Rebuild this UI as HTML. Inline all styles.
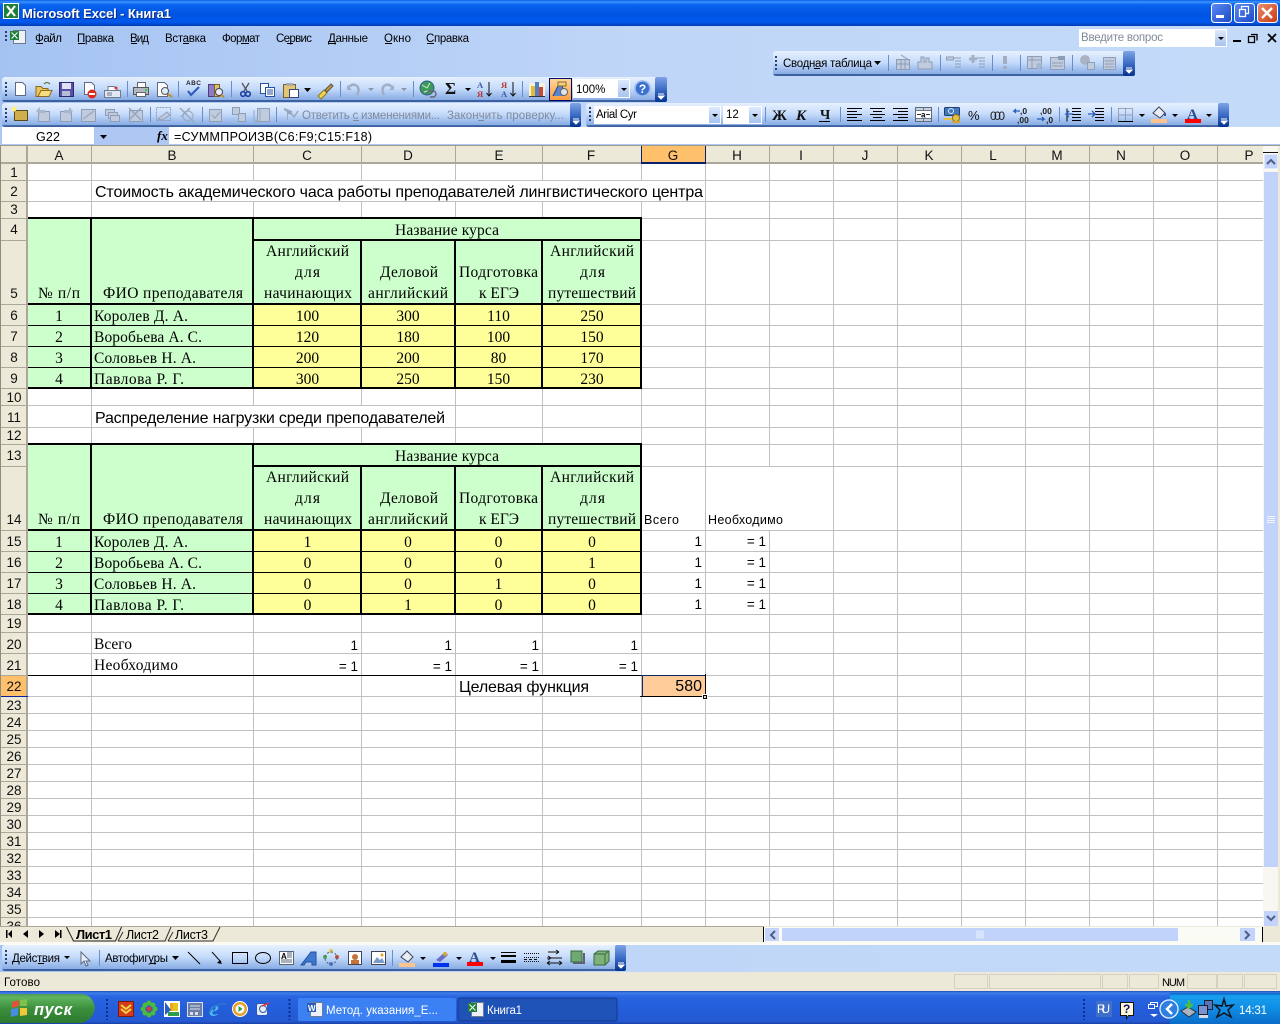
<!DOCTYPE html>
<html lang="ru">
<head>
<meta charset="utf-8">
<title>Microsoft Excel - Книга1</title>
<style>
html,body{margin:0;padding:0;background:#fff;overflow:hidden}
svg{display:block}
text{font-family:"Liberation Sans","Noto Sans CJK SC",sans-serif;font-size:12px;fill:#000;white-space:pre}
.h{font-size:13.5px;text-anchor:middle;fill:#111}
.r{font-size:13.5px;text-anchor:middle;fill:#111}
.t{font-family:"Liberation Serif","Noto Serif CJK SC",serif;font-size:15.5px;transform:translateY(1px)}
.t.u{transform:none}
.c{text-anchor:middle}
.e{text-anchor:end}
.a{font-size:13.5px}
.m{font-size:11.5px}
.g{font-size:11.5px;fill:#808a9c}
.w{fill:#fff;font-size:11.5px}
.cr{shape-rendering:crispEdges}
.sep{stroke:#6a8ccb;stroke-width:1}
.hd{stroke:#27416f;stroke-width:2;stroke-dasharray:2 2;fill:none}
.ds{fill:#c0cbdd;stroke:#8f9db6;stroke-width:1}
.dl{stroke:#8e9cb5;stroke-width:1;fill:none}
.k{stroke:#000;stroke-width:1;fill:none}
</style>
</head>
<body>
<svg xmlns="http://www.w3.org/2000/svg" width="1280" height="1024" viewBox="0 0 1280 1024">
<defs>
<linearGradient id="ttl" x1="0" y1="0" x2="0" y2="1"><stop offset="0" stop-color="#0a5ce6"/><stop offset=".07" stop-color="#3b93ff"/><stop offset=".18" stop-color="#0a63ee"/><stop offset=".55" stop-color="#0054e3"/><stop offset=".85" stop-color="#0058ee"/><stop offset="1" stop-color="#003cb0"/></linearGradient>
<linearGradient id="bar" x1="0" y1="0" x2="1" y2="0"><stop offset="0" stop-color="#a5c3f2"/><stop offset=".5" stop-color="#c0d6f8"/><stop offset="1" stop-color="#c4daf9"/></linearGradient>
<linearGradient id="tb" x1="0" y1="0" x2="0" y2="1"><stop offset="0" stop-color="#e6f0fe"/><stop offset=".45" stop-color="#c6dcfb"/><stop offset=".92" stop-color="#88ace4"/><stop offset=".93" stop-color="#3b619f"/><stop offset="1" stop-color="#3b619f"/></linearGradient>
<linearGradient id="che" x1="0" y1="0" x2="0" y2="1"><stop offset="0" stop-color="#7ea3e6"/><stop offset=".5" stop-color="#3c6cc4"/><stop offset="1" stop-color="#04338f"/></linearGradient>
<linearGradient id="dd" x1="0" y1="0" x2="0" y2="1"><stop offset="0" stop-color="#dde9fc"/><stop offset="1" stop-color="#a6c2ee"/></linearGradient>
<linearGradient id="btn" x1="0" y1="0" x2="1" y2="1"><stop offset="0" stop-color="#5c8cf2"/><stop offset="1" stop-color="#1c48c8"/></linearGradient>
<linearGradient id="cls" x1="0" y1="0" x2="1" y2="1"><stop offset="0" stop-color="#ea8f6e"/><stop offset="1" stop-color="#c83a14"/></linearGradient>
<linearGradient id="task" x1="0" y1="0" x2="0" y2="1"><stop offset="0" stop-color="#1f4fc2"/><stop offset=".06" stop-color="#3f7ee8"/><stop offset=".16" stop-color="#2a66e0"/><stop offset=".5" stop-color="#245edb"/><stop offset=".92" stop-color="#2459d2"/><stop offset="1" stop-color="#1941a5"/></linearGradient>
<linearGradient id="tray" x1="0" y1="0" x2="0" y2="1"><stop offset="0" stop-color="#0c62c4"/><stop offset=".1" stop-color="#19a0ee"/><stop offset=".5" stop-color="#0f8de4"/><stop offset="1" stop-color="#0a6cc8"/></linearGradient>
<linearGradient id="st" x1="0" y1="0" x2="0" y2="1"><stop offset="0" stop-color="#4f9a4f"/><stop offset=".12" stop-color="#5fb45f"/><stop offset=".5" stop-color="#3c8f3c"/><stop offset="1" stop-color="#2e7a30"/></linearGradient>
<linearGradient id="act" x1="0" y1="0" x2="0" y2="1"><stop offset="0" stop-color="#ffd79c"/><stop offset="1" stop-color="#fb9c40"/></linearGradient>
</defs>

<!-- window chrome -->
<rect width="1280" height="146" fill="url(#bar)"/>
<rect width="1280" height="26" fill="url(#ttl)"/>
<g class="cr"><rect x="3" y="3" width="16" height="16" fill="#fff"/><rect x="4" y="4" width="14" height="14" fill="#1f7f3a"/></g>
<path d="M7 6l8 10M15 6l-8 10" stroke="#fff" stroke-width="2.2"/>
<text x="23" y="19" textLength="149" style="font-size:13px;font-weight:700;fill:#0b2a80">Microsoft Excel - Книга1</text>
<text x="22" y="18" textLength="149" style="font-size:13px;font-weight:700;fill:#fff">Microsoft Excel - Книга1</text>
<!-- caption buttons -->
<rect x="1211.5" y="3.5" width="20" height="19" rx="3" fill="url(#btn)" stroke="#fff"/>
<rect x="1216" y="15" width="8" height="3" fill="#fff"/>
<rect x="1234.5" y="3.5" width="20" height="19" rx="3" fill="url(#btn)" stroke="#fff"/>
<path d="M1241.5 9.5v-3h7v7h-3M1239.5 9.5h6v7h-6z" stroke="#fff" stroke-width="1.2" fill="none"/>
<rect x="1257.5" y="3.5" width="20" height="19" rx="3" fill="url(#cls)" stroke="#fff"/>
<path d="M1262 8l10 10M1272 8l-10 10" stroke="#fff" stroke-width="2.4"/>

<!-- menu bar -->
<line x1="6" y1="31" x2="6" y2="43" class="hd"/>
<rect x="13.5" y="30.5" width="12" height="13" fill="#eef2f8" stroke="#6b7b92"/>
<rect x="10" y="31" width="9" height="9" fill="#1f7f3a"/>
<path d="M11.5 32.5l6 6M17.5 32.5l-6 6" stroke="#fff"/>
<text class="m" x="35" y="42" textLength="27">Файл</text>
<text class="m" x="77" y="42" textLength="37">Правка</text>
<text class="m" x="130" y="42" textLength="19">Вид</text>
<text class="m" x="165" y="42" textLength="41">Вставка</text>
<text class="m" x="222" y="42" textLength="38">Формат</text>
<text class="m" x="276" y="42" textLength="36">Сервис</text>
<text class="m" x="328" y="42" textLength="40">Данные</text>
<text class="m" x="384" y="42" textLength="27">Окно</text>
<text class="m" x="426" y="42" textLength="43">Справка</text>
<g class="cr" fill="#000"><rect x="36" y="43" width="7" height="1"/><rect x="78" y="43" width="7" height="1"/><rect x="131" y="43" width="6" height="1"/><rect x="183" y="43" width="6" height="1"/><rect x="241" y="43" width="8" height="1"/><rect x="287" y="43" width="6" height="1"/><rect x="329" y="43" width="7" height="1"/><rect x="385" y="43" width="7" height="1"/><rect x="427" y="43" width="7" height="1"/></g>
<!-- ask box -->
<rect x="1079" y="29" width="148" height="18" fill="#fff" class="cr"/>
<rect x="1215" y="30" width="11" height="16" fill="url(#dd)" class="cr"/>
<path d="M1218 37h6l-3 3z"/>
<text class="g" x="1081" y="41" textLength="82">Введите вопрос</text>
<rect x="1233" y="40" width="8" height="2" class="cr"/>
<path d="M1251 34.5h6v6M1248.5 36.5h6v6h-6z" fill="none" stroke="#000" stroke-width="1.3"/>
<path d="M1268 34l8 8M1276 34l-8 8" stroke="#000" stroke-width="1.8"/>

<!-- pivot toolbar -->
<rect x="773" y="51" width="362" height="25" rx="3" fill="url(#tb)"/>
<rect x="1123" y="51" width="12" height="25" rx="2" fill="url(#che)"/>
<path d="M1126 68h6M1126 70h6l-3 3-3-3" stroke="#fff" fill="#fff"/>
<line x1="776" y1="56" x2="776" y2="70" class="hd"/>
<text class="m" x="783" y="67" textLength="89">Сводная таблица</text>
<rect x="814" y="68" width="6" height="1" class="cr"/>
<path d="M874 61h7l-3.5 4z"/>
<g class="sep"><line x1="888.5" y1="55" x2="888.5" y2="71"/><line x1="940.5" y1="55" x2="940.5" y2="71"/><line x1="992.5" y1="55" x2="992.5" y2="71"/><line x1="1020.5" y1="55" x2="1020.5" y2="71"/><line x1="1072.5" y1="55" x2="1072.5" y2="71"/></g>
<g>
<rect class="ds" x="896.5" y="59.5" width="13" height="10"/><path class="dl" d="M901 55l8 5M896 64h13M901 60v9M905 60v9"/>
<path class="ds" d="M918 69v-7h3v-5h3v5h2v-4h3v4h3v7z"/>
<path class="dl" d="M953 58h8M955 61h6M955 64h6M955 67h6"/><rect class="ds" x="946.5" y="57" width="7" height="3"/>
<path class="dl" d="M977 58h8M979 61h6M979 64h6M979 67h6"/><path d="M969 59h8M973 55v8" stroke="#a4b0c6" stroke-width="3"/>
<path d="M1005 56v8" stroke="#a3adbf" stroke-width="4"/><rect x="1003" y="66" width="4" height="3" fill="#a3adbf"/>
<rect class="ds" x="1027.5" y="56.5" width="14" height="12"/><path class="dl" d="M1027 60h14M1032 57v12"/><circle cx="1039" cy="66" r="3" fill="#a4b6d0"/>
<rect class="ds" x="1050.5" y="57.5" width="14" height="12"/><rect x="1058" y="56" width="7" height="4" fill="#8e9cb5"/><path class="dl" d="M1052 63h11M1052 66h11"/>
<circle cx="1085" cy="60" r="5" fill="#aab3c3"/><rect class="ds" x="1087.5" y="62.5" width="7" height="7"/>
<rect class="ds" x="1103.5" y="57.5" width="12" height="12"/><path class="dl" d="M1105 61h9M1105 64h9M1105 67h9"/>
</g>

<!-- standard toolbar -->
<rect x="2" y="77" width="665" height="25" rx="3" fill="url(#tb)"/>
<rect x="655" y="77" width="12" height="25" rx="2" fill="url(#che)"/>
<path d="M658 94h6M658 96h6l-3 3-3-3" stroke="#fff" fill="#fff"/>
<line x1="6" y1="82" x2="6" y2="97" class="hd"/>
<path d="M15.5 82.5h7l3 3v10h-10z" fill="#fff" stroke="#5d6a82"/>
<path d="M36 86.5h5l2 2h5v8H36z" fill="#e8c45c" stroke="#8a6a1c"/><path d="M38 96.5l3-6h11l-3 6z" fill="#f8dc80" stroke="#8a6a1c"/><path d="M44 84q3-3 6 0" stroke="#3a6a2c" fill="none"/>
<rect x="59.5" y="82.5" width="14" height="14" fill="#5a4fa8" stroke="#2d2a70"/><rect x="62" y="83" width="9" height="6" fill="#dfe3ef"/><rect x="62" y="91" width="8" height="5" fill="#b6bcd6"/>
<path d="M84.5 82.5h7l3 3v9h-10z" fill="#fff" stroke="#5d6a82"/><circle cx="92" cy="94" r="4.5" fill="#dd2b1b"/><rect x="89" y="93" width="6" height="2" fill="#fff"/>
<path d="M108 86.5h6l4 4h-10z" fill="#fff" stroke="#6d7a92"/><rect x="104.5" y="90.5" width="16" height="7" fill="#e2e6ee" stroke="#6d7a92"/><circle cx="116" cy="88" r="1.5" fill="#d33"/><path d="M107 93h5M107 95h5" stroke="#6d7a92"/>
<rect x="137.5" y="82.5" width="8" height="5" fill="#fff" stroke="#666"/><rect x="133.5" y="87.5" width="15" height="7" fill="#b4b8c4" stroke="#555"/><rect x="136.5" y="92.5" width="9" height="4" fill="#fff" stroke="#666"/><rect x="145" y="89" width="2" height="2" fill="#3c3"/>
<path d="M157.5 82.5h7l3 3v11h-10z" fill="#fff" stroke="#5d6a82"/><circle cx="165" cy="91" r="3.5" fill="#dfeefa" stroke="#555"/><path d="M168 94l4 3" stroke="#c88a22" stroke-width="2"/>
<text x="186" y="85" style="font-size:6.5px;font-weight:700;fill:#223" textLength="15">ABC</text><path d="M188 91l3 4 8-8" stroke="#2a58b8" stroke-width="2" fill="none"/>
<rect x="208.5" y="84.5" width="6" height="12" fill="#8d7cc4" stroke="#4a3d84"/><rect x="214.5" y="84.5" width="5" height="12" fill="#d8c46c" stroke="#776628"/><circle cx="219" cy="92" r="3.5" fill="#eef" stroke="#445"/><path d="M221 95l3 2" stroke="#c88a22" stroke-width="2"/>
<path d="M242 83l5 8M249 83l-5 8" stroke="#555" stroke-width="1.3"/><circle cx="243" cy="94" r="2.3" fill="none" stroke="#1f3f9f" stroke-width="1.6"/><circle cx="248" cy="94" r="2.3" fill="none" stroke="#1f3f9f" stroke-width="1.6"/>
<path d="M260.5 83.5h8v10h-8z" fill="#fff" stroke="#2a4f9f"/><path d="M265.5 87.5h9v9h-9z" fill="#fff" stroke="#2a4f9f"/><path d="M267 90h6M267 92h6M267 94h6" stroke="#2a4f9f"/>
<rect x="283.5" y="84.5" width="12" height="13" fill="#e2c677" stroke="#77602a"/><rect x="286" y="83" width="7" height="3" fill="#aaa"/><rect x="289.5" y="89.5" width="9" height="8" fill="#fff" stroke="#33457a"/>
<path d="M304 88h7l-3.5 4z"/>
<path d="M318 96l6-6 3 3-6 6z" fill="#f2d24e" stroke="#8b7a22"/><path d="M325 90l6-6 2 2-6 6z" fill="#c89a2c" stroke="#555"/>
<g class="sep"><line x1="127.5" y1="81" x2="127.5" y2="97"/><line x1="178.5" y1="81" x2="178.5" y2="97"/><line x1="231.5" y1="81" x2="231.5" y2="97"/><line x1="340.5" y1="81" x2="340.5" y2="97"/><line x1="413.5" y1="81" x2="413.5" y2="97"/><line x1="522.5" y1="81" x2="522.5" y2="97"/></g>
<path d="M349 87q4-4 8-1 3 3 0 9" stroke="#a1afc6" stroke-width="2.5" fill="none"/><path d="M347 85v5h5z" fill="#a1afc6"/>
<path d="M368 88h6l-3 3z" fill="#8a94a8"/>
<path d="M392 87q-4-4-8-1-3 3 0 9" stroke="#a1afc6" stroke-width="2.5" fill="none"/><path d="M394 85v5h-5z" fill="#a1afc6"/>
<path d="M401 88h6l-3 3z" fill="#8a94a8"/>
<circle cx="427" cy="88" r="7" fill="#3f9a5a" stroke="#2c5f8f"/><path d="M422 85l5 3 3-5M424 92l4-1" stroke="#cfe9d2" fill="none"/><path d="M427 94a3 3 0 0 1 3-3h3a3 3 0 0 1 0 6h-3" stroke="#667" stroke-width="1.4" fill="none"/>
<text x="445" y="94" style="font-family:'Liberation Serif',serif;font-size:17px;font-weight:700;fill:#111">Σ</text>
<path d="M465 88h6l-3 3z"/>
<text x="477" y="88" style="font-family:'Liberation Serif',serif;font-size:8.5px;font-weight:700;fill:#3a5aa8">А</text><text x="477" y="97" style="font-family:'Liberation Serif',serif;font-size:8.5px;font-weight:700;fill:#b83a3a">Я</text>
<path d="M489 82v14M486.5 93l2.5 3 2.5-3" stroke="#111" fill="none"/>
<text x="501" y="88" style="font-family:'Liberation Serif',serif;font-size:8.5px;font-weight:700;fill:#b83a3a">Я</text><text x="501" y="97" style="font-family:'Liberation Serif',serif;font-size:8.5px;font-weight:700;fill:#3a5aa8">А</text>
<path d="M513 82v14M510.5 93l2.5 3 2.5-3" stroke="#111" fill="none"/>
<g class="cr"><rect x="529" y="83" width="16" height="13" fill="#f6f2dc"/><rect x="531" y="86" width="4" height="10" fill="#e2bb3b"/><rect x="535" y="82" width="4" height="14" fill="#4f7fc9"/><rect x="539" y="87" width="4" height="9" fill="#c84a3a"/><rect x="529" y="96" width="16" height="1" fill="#334"/></g>
<rect x="549.5" y="78.5" width="22" height="22" fill="url(#act)" stroke="#000a6c"/>
<path d="M553 96l6-12h3l2 12" fill="#5a85cc" stroke="#2c3f80"/><rect x="558" y="82" width="8" height="4" fill="#f0d27a" stroke="#8a6a2a"/><circle cx="564" cy="92" r="3.5" fill="#dfe6ef" stroke="#666"/>
<rect x="573" y="79" width="57" height="19" fill="#fff" class="cr"/>
<rect x="618" y="80" width="11" height="17" fill="url(#dd)" class="cr"/>
<path d="M621 88h6l-3 3z"/>
<text x="576" y="93" style="font-size:11.5px">100%</text>
<circle cx="642.5" cy="88.5" r="7.5" fill="#3a70d0" stroke="#9ab9ea" stroke-width="1.6"/>
<text x="642.5" y="93" class="c" style="font-size:12px;font-weight:700;fill:#fff">?</text>

<!-- reviewing toolbar -->
<rect x="2" y="103" width="579" height="24" rx="3" fill="url(#tb)"/>
<rect x="570" y="103" width="11" height="24" rx="2" fill="url(#che)"/>
<path d="M573 119h6M573 121h6l-3 3-3-3" stroke="#fff" fill="#fff"/>
<line x1="6" y1="108" x2="6" y2="122" class="hd"/>
<rect x="14.5" y="110.5" width="13" height="10" fill="#cfae4e" stroke="#5a4a1c"/><circle cx="14" cy="109" r="2.5" fill="#fff27a"/>
<g>
<rect class="ds" x="38.5" y="111.5" width="11" height="10"/><path d="M36 111l4-4v3h5v3h-5v2z" fill="#a9b6cc"/>
<rect class="ds" x="60.5" y="111.5" width="11" height="10"/><path d="M73 111l-4-4v3h-5v3h5v2z" fill="#a9b6cc"/>
<rect class="ds" x="81.5" y="109.5" width="14" height="12"/><path class="dl" d="M83 119l11-8"/>
<rect class="ds" x="105.5" y="109.5" width="9" height="6"/><rect class="ds" x="108.5" y="112.5" width="9" height="6"/><rect class="ds" x="110.5" y="115.5" width="9" height="6"/>
<rect class="ds" x="129.5" y="110.5" width="13" height="11"/><path d="M129 108l12 12M141 108l-12 12" stroke="#98a6bc" stroke-width="1.5"/>
<path class="dl" stroke-dasharray="2 1" d="M156.5 107.5h14v13h-14z"/><path class="ds" d="M158 119l9-7 3 3-8 5z"/>
<path d="M180 108l14 14M190 108l-9 9" stroke="#9aa8be" stroke-width="1.5"/><circle cx="188" cy="116" r="5" fill="none" stroke="#9aa8be"/>
<rect class="ds" x="209.5" y="109.5" width="12" height="12"/><path d="M212 115l3 3 5-6" stroke="#94a2b8" fill="none"/>
<rect class="ds" x="232.5" y="107.5" width="7" height="7"/><rect class="ds" x="238.5" y="113.5" width="7" height="8"/>
<rect class="ds" x="257.5" y="108.5" width="12" height="13"/><path d="M254 110v9a3 3 0 0 0 6 0v-10" stroke="#98a6bc" fill="none"/>
<path d="M284 108l8 3v4l-4-1v6h-1v-8l-3-2z" fill="#9aa8be"/><path d="M291 113l3 4 4-6" stroke="#9aa8be" stroke-width="1.5" fill="none"/>
</g>
<g class="sep"><line x1="150.5" y1="107" x2="150.5" y2="122"/><line x1="202.5" y1="107" x2="202.5" y2="122"/><line x1="276.5" y1="107" x2="276.5" y2="122"/></g>
<text class="g" x="302" y="119" textLength="138">Ответить с изменениями...</text>
<text class="g" x="447" y="119" textLength="117">Закончить проверку...</text>
<rect x="353" y="120" width="6" height="1" fill="#808a9c" class="cr"/><rect x="478" y="120" width="6" height="1" fill="#808a9c" class="cr"/>

<!-- formatting toolbar -->
<rect x="586" y="103" width="643" height="24" rx="3" fill="url(#tb)"/>
<rect x="1218" y="103" width="11" height="24" rx="2" fill="url(#che)"/>
<path d="M1221 119h6M1221 121h6l-3 3-3-3" stroke="#fff" fill="#fff"/>
<line x1="590" y1="107" x2="590" y2="122" class="hd"/>
<rect x="594" y="106" width="127" height="18" fill="#fff" class="cr"/>
<rect x="709" y="107" width="11" height="16" fill="url(#dd)" class="cr"/>
<path d="M712 114h6l-3 3z"/>
<text x="596" y="118" style="font-size:11.5px" textLength="41">Arial Cyr</text>
<rect x="723" y="106" width="39" height="18" fill="#fff" class="cr"/>
<rect x="749" y="107" width="12" height="16" fill="url(#dd)" class="cr"/>
<path d="M752 114h6l-3 3z"/>
<text x="726" y="118" style="font-size:11.5px">12</text>
<g class="sep"><line x1="765.5" y1="107" x2="765.5" y2="122"/><line x1="840.5" y1="107" x2="840.5" y2="122"/><line x1="938.5" y1="107" x2="938.5" y2="122"/><line x1="1059.5" y1="107" x2="1059.5" y2="122"/><line x1="1111.5" y1="107" x2="1111.5" y2="122"/></g>
<text x="772" y="120" style="font-family:'Liberation Serif',serif;font-size:15px;font-weight:700;fill:#111">Ж</text>
<text x="796" y="120" style="font-family:'Liberation Serif',serif;font-size:15px;font-weight:700;font-style:italic;fill:#111">К</text>
<text x="820" y="119" style="font-family:'Liberation Serif',serif;font-size:14px;font-weight:700;fill:#111">Ч</text><rect x="819" y="121" width="11" height="1" class="cr"/>
<path class="k" d="M847 108.5h15M847 111.5h10M847 114.5h15M847 117.5h10M847 120.5h15"/>
<path class="k" d="M870 108.5h15M873 111.5h9M870 114.5h15M873 117.5h9M870 120.5h15"/>
<path class="k" d="M893 108.5h15M898 111.5h10M893 114.5h15M898 117.5h10M893 120.5h15"/>
<rect x="915.5" y="107.5" width="16" height="14" fill="#c8d0e0" stroke="#5c6b80"/><path d="M916 110.5h15M916 118.5h15M923.5 108v3M923.5 118v3" stroke="#6a778c"/><rect x="916" y="111" width="15" height="7" fill="#fff"/><path d="M917 114.5h4M926 114.5h4" stroke="#333"/><text x="921" y="117.5" style="font-size:8px;font-weight:700">a</text>
<rect x="944.5" y="107.5" width="15" height="8" rx="1" fill="#4278c0" stroke="#223f70"/><circle cx="951" cy="111" r="2.5" fill="none" stroke="#dfe8f8"/><circle cx="956" cy="118" r="3.5" fill="#e8c23c" stroke="#8a6e1c"/><rect x="944" y="118" width="8" height="2" fill="#e8c23c"/><rect x="952" y="121" width="8" height="2" fill="#d2a62c"/>
<text x="968" y="120" style="font-size:13px;fill:#111">%</text>
<text x="990" y="120" style="font-size:12px;fill:#222" textLength="15">000</text>
<text x="1020" y="114" style="font-size:8.5px;font-weight:700;fill:#222">,0</text><text x="1017" y="123" style="font-size:8.5px;font-weight:700;fill:#222">,00</text><path d="M1020 111h-6l2-2m-2 2l2 2" stroke="#2a58b8" stroke-width="1.3" fill="none"/>
<text x="1040" y="114" style="font-size:8.5px;font-weight:700;fill:#222">,00</text><text x="1046" y="123" style="font-size:8.5px;font-weight:700;fill:#222">,0</text><path d="M1037 119h7l-2-2m2 2l-2 2" stroke="#2a58b8" stroke-width="1.3" fill="none"/>
<path class="k" d="M1072 108.5h9M1072 111.5h9M1072 114.5h9M1072 117.5h9M1072 120.5h9M1067 108.5v13"/><path d="M1073 114h-7l3-3m-3 3l3 3" stroke="#2a58b8" stroke-width="1.3" fill="none"/>
<path class="k" d="M1095 108.5h9M1095 111.5h9M1095 114.5h9M1095 117.5h9M1095 120.5h9"/><path d="M1088 114h7l-3-3m3 3l-3 3" stroke="#2a58b8" stroke-width="1.3" fill="none"/>
<path d="M1118.5 108.5h14v13M1118.5 108.5v13M1125.5 108.5v13M1118.5 115h14" stroke="#667" stroke-dasharray="1 1" fill="none"/><rect x="1118" y="121" width="15" height="1" class="cr"/>
<path d="M1139 114h6l-3 3z"/>
<path d="M1153 113l6-6 6 6-5 5z" fill="#e8eef8" stroke="#445"/><path d="M1165 113v3" stroke="#35a" stroke-width="2"/><rect x="1151" y="119" width="16" height="4" fill="#fcc48c" class="cr"/>
<path d="M1172 114h6l-3 3z"/>
<text x="1187" y="119" style="font-family:'Liberation Serif',serif;font-size:15px;font-weight:700;fill:#2d4a90">A</text><rect x="1185" y="119" width="16" height="4" fill="#f00" class="cr"/>
<path d="M1206 114h6l-3 3z"/>

<!-- formula bar -->
<g class="cr">
<rect x="0" y="127" width="1280" height="18" fill="#aec8f3"/>
<rect x="2" y="127" width="92" height="17" fill="#fff"/>
<rect x="169" y="127" width="1111" height="17" fill="#fff"/>
<rect x="0" y="145" width="1280" height="1" fill="#9d9a8c"/>
</g>
<path d="M100 135h7l-3.5 4z"/>
<text x="36" y="141" style="font-size:12.5px" textLength="24">G22</text>
<text x="157" y="140" style="font-family:'Liberation Serif',serif;font-size:13px;font-style:italic;font-weight:700">fx</text>
<text x="174" y="141" style="font-size:12.5px" textLength="198">=СУММПРОИЗВ(C6:F9;C15:F18)</text>

<!-- sheet area -->
<rect x="0" y="146" width="1280" height="781" fill="#fff" class="cr"/>

<!-- fills -->
<g class="cr">
<rect x="27" y="218" width="614" height="86" fill="#ccffcc"/>
<rect x="27" y="304" width="226" height="84" fill="#ccffcc"/>
<rect x="253" y="304" width="388" height="84" fill="#ffff99"/>
<rect x="27" y="444" width="614" height="86" fill="#ccffcc"/>
<rect x="27" y="530" width="226" height="84" fill="#ccffcc"/>
<rect x="253" y="530" width="388" height="84" fill="#ffff99"/>
<rect x="642" y="676" width="63" height="20" fill="#ffcc99"/>
</g>

<!-- gridlines -->
<path class="cr" stroke="#c0c0c0" fill="none" d="M27 180.5H1263M27 201.5H1263M27 218.5H1263M641 240.5H1263M641 304.5H1263M641 325.5H1263M641 346.5H1263M641 367.5H1263M27 388.5H1263M27 405.5H1263M27 427.5H1263M27 444.5H1263M641 466.5H1263M641 530.5H1263M641 551.5H1263M641 572.5H1263M641 593.5H1263M27 614.5H1263M27 632.5H1263M27 653.5H1263M641 675.5H1263M27 696.5H1263M27 713.5H1263M27 730.5H1263M27 747.5H1263M27 764.5H1263M27 781.5H1263M27 798.5H1263M27 815.5H1263M27 832.5H1263M27 849.5H1263M27 866.5H1263M27 883.5H1263M27 900.5H1263M27 917.5H1263
M91.5 163V218M91.5 388V444M91.5 614V927
M253.5 163V180M253.5 201V218M253.5 388V405M253.5 427V444M253.5 614V927
M361.5 163V180M361.5 201V218M361.5 388V405M361.5 427V444M361.5 614V927
M455.5 163V180M455.5 201V218M455.5 388V444M455.5 614V927
M542.5 163V180M542.5 201V218M542.5 388V444M542.5 614V675M542.5 696V927
M641.5 163V180M641.5 201V218M641.5 388V444M641.5 614V927
M705.5 163V927
M769.5 163V466M769.5 530V927
M833.5 163V927M897.5 163V927M961.5 163V927M1025.5 163V927M1089.5 163V927M1153.5 163V927M1217.5 163V927"/>

<!-- thick borders -->
<g class="cr" fill="#000">
<rect x="26" y="217" width="616" height="2"/><rect x="26" y="387" width="616" height="2"/>
<rect x="26" y="303" width="616" height="2"/><rect x="252" y="239" width="390" height="2"/>
<rect x="90" y="217" width="2" height="172"/><rect x="252" y="217" width="2" height="172"/>
<rect x="360" y="240" width="2" height="149"/><rect x="454" y="240" width="2" height="149"/><rect x="541" y="240" width="2" height="149"/><rect x="640" y="217" width="2" height="172"/>
<rect x="27" y="325" width="614" height="1"/><rect x="27" y="346" width="614" height="1"/><rect x="27" y="367" width="614" height="1"/>
<rect x="26" y="443" width="616" height="2"/><rect x="26" y="613" width="616" height="2"/>
<rect x="26" y="529" width="616" height="2"/><rect x="252" y="465" width="390" height="2"/>
<rect x="90" y="443" width="2" height="172"/><rect x="252" y="443" width="2" height="172"/>
<rect x="360" y="466" width="2" height="149"/><rect x="454" y="466" width="2" height="149"/><rect x="541" y="466" width="2" height="149"/><rect x="640" y="443" width="2" height="172"/>
<rect x="27" y="551" width="614" height="1"/><rect x="27" y="572" width="614" height="1"/><rect x="27" y="593" width="614" height="1"/>
<rect x="27" y="675" width="614" height="1"/>
<rect x="641" y="675" width="65" height="1" fill="#0a2a6a"/><rect x="642" y="676" width="1" height="20" fill="#0a2a6a"/><rect x="705" y="674" width="1" height="22"/><rect x="640" y="696" width="66" height="1"/>
<rect x="702" y="694" width="6" height="6" fill="#fff"/><rect x="703" y="695" width="4" height="4"/><rect x="704" y="696" width="2" height="2" fill="#ddd"/>
</g>

<!-- column headers -->
<g class="cr">
<rect x="0" y="146" width="1264" height="17" fill="#ece9d8"/>
<rect x="0" y="163" width="27" height="764" fill="#ece9d8"/>
<rect x="641" y="146" width="64" height="17" fill="#ffc06c"/>
<rect x="0" y="676" width="27" height="20" fill="#ffc06c"/>
<rect x="0" y="162" width="1264" height="2" fill="#aca899"/>
<rect x="26" y="146" width="2" height="781" fill="#aca899"/>
<rect x="0" y="146" width="1" height="781" fill="#8f8c7e"/>
<path fill="none" stroke="#aca899" d="M91.5 146V163M253.5 146V163M361.5 146V163M455.5 146V163M542.5 146V163M769.5 146V163M833.5 146V163M897.5 146V163M961.5 146V163M1025.5 146V163M1089.5 146V163M1153.5 146V163M1217.5 146V163
M1 180.5H26M1 201.5H26M1 218.5H26M1 240.5H26M1 304.5H26M1 325.5H26M1 346.5H26M1 367.5H26M1 388.5H26M1 405.5H26M1 427.5H26M1 444.5H26M1 466.5H26M1 530.5H26M1 551.5H26M1 572.5H26M1 593.5H26M1 614.5H26M1 632.5H26M1 653.5H26M1 675.5H26M1 713.5H26M1 730.5H26M1 747.5H26M1 764.5H26M1 781.5H26M1 798.5H26M1 815.5H26M1 832.5H26M1 849.5H26M1 866.5H26M1 883.5H26M1 900.5H26M1 917.5H26"/>
<rect x="641" y="146" width="1" height="17" fill="#0a1f6a"/><rect x="705" y="146" width="1" height="17" fill="#0a1f6a"/><rect x="641" y="162" width="65" height="2" fill="#0a1f6a"/>
<rect x="1" y="696" width="27" height="1" fill="#0a1f9a"/>
</g>
<text class="h" x="59" y="160">A</text><text class="h" x="172" y="160">B</text><text class="h" x="307" y="160">C</text><text class="h" x="408" y="160">D</text><text class="h" x="499" y="160">E</text><text class="h" x="591" y="160">F</text><text class="h" x="673" y="160">G</text><text class="h" x="737" y="160">H</text><text class="h" x="801" y="160">I</text><text class="h" x="865" y="160">J</text><text class="h" x="929" y="160">K</text><text class="h" x="993" y="160">L</text><text class="h" x="1057" y="160">M</text><text class="h" x="1121" y="160">N</text><text class="h" x="1185" y="160">O</text><text class="h" x="1249" y="160">P</text>
<g>
<text class="r" x="14" y="177">1</text><text class="r" x="14" y="196">2</text><text class="r" x="14" y="214">3</text><text class="r" x="14" y="234">4</text><text class="r" x="14" y="298">5</text><text class="r" x="14" y="320">6</text><text class="r" x="14" y="341">7</text><text class="r" x="14" y="362">8</text><text class="r" x="14" y="383">9</text><text class="r" x="14" y="402">10</text><text class="r" x="14" y="422">11</text><text class="r" x="14" y="440">12</text><text class="r" x="14" y="460">13</text><text class="r" x="14" y="524">14</text><text class="r" x="14" y="546">15</text><text class="r" x="14" y="567">16</text><text class="r" x="14" y="588">17</text><text class="r" x="14" y="609">18</text><text class="r" x="14" y="628">19</text><text class="r" x="14" y="649">20</text><text class="r" x="14" y="670">21</text><text class="r" x="14" y="691">22</text><text class="r" x="14" y="710">23</text><text class="r" x="14" y="727">24</text><text class="r" x="14" y="744">25</text><text class="r" x="14" y="761">26</text><text class="r" x="14" y="778">27</text><text class="r" x="14" y="795">28</text><text class="r" x="14" y="812">29</text><text class="r" x="14" y="829">30</text><text class="r" x="14" y="846">31</text><text class="r" x="14" y="863">32</text><text class="r" x="14" y="880">33</text><text class="r" x="14" y="897">34</text><text class="r" x="14" y="914">35</text><text class="r" x="14" y="931">36</text>
</g>

<!-- table 1 text -->
<text x="95" y="197" style="font-size:16px" textLength="608">Стоимость академического часа работы преподавателей лингвистического центра</text>
<text class="t" x="395" y="234" textLength="104">Название курса</text>
<text class="t u" x="266" y="256" textLength="83">Английский</text><text class="t u" x="295" y="277" textLength="25">для</text><text class="t u" x="264" y="298" textLength="88">начинающих</text>
<text class="t u" x="380" y="277" textLength="58">Деловой</text><text class="t u" x="368" y="298" textLength="80">английский</text>
<text class="t u" x="459" y="277" textLength="79">Подготовка</text><text class="t u" x="479" y="298" textLength="40">к ЕГЭ</text>
<text class="t u" x="550" y="256" textLength="84">Английский</text><text class="t u" x="580" y="277" textLength="25">для</text><text class="t u" x="548" y="298" textLength="88">путешествий</text>
<text class="t u" x="38" y="298" textLength="42">№ п/п</text><text class="t u" x="103" y="298" textLength="140">ФИО преподавателя</text>
<text class="t c" x="59" y="320">1</text><text class="t c" x="59" y="341">2</text><text class="t c" x="59" y="362">3</text><text class="t c" x="59" y="383">4</text>
<text class="t" x="94" y="320" textLength="94">Королев Д. А.</text><text class="t" x="94" y="341" textLength="108">Воробьева А. С.</text><text class="t" x="94" y="362" textLength="102">Соловьев Н. А.</text><text class="t" x="94" y="383" textLength="90">Павлова Р. Г.</text>
<text class="t c" x="307.5" y="320">100</text><text class="t c" x="408" y="320">300</text><text class="t c" x="498.5" y="320">110</text><text class="t c" x="592" y="320">250</text>
<text class="t c" x="307.5" y="341">120</text><text class="t c" x="408" y="341">180</text><text class="t c" x="498.5" y="341">100</text><text class="t c" x="592" y="341">150</text>
<text class="t c" x="307.5" y="362">200</text><text class="t c" x="408" y="362">200</text><text class="t c" x="498.5" y="362">80</text><text class="t c" x="592" y="362">170</text>
<text class="t c" x="307.5" y="383">300</text><text class="t c" x="408" y="383">250</text><text class="t c" x="498.5" y="383">150</text><text class="t c" x="592" y="383">230</text>

<!-- table 2 text -->
<text x="95" y="423" style="font-size:16px" textLength="350">Распределение нагрузки среди преподавателей</text>
<text class="t" x="395" y="460" textLength="104">Название курса</text>
<text class="t u" x="266" y="482" textLength="83">Английский</text><text class="t u" x="295" y="503" textLength="25">для</text><text class="t u" x="264" y="524" textLength="88">начинающих</text>
<text class="t u" x="380" y="503" textLength="58">Деловой</text><text class="t u" x="368" y="524" textLength="80">английский</text>
<text class="t u" x="459" y="503" textLength="79">Подготовка</text><text class="t u" x="479" y="524" textLength="40">к ЕГЭ</text>
<text class="t u" x="550" y="482" textLength="84">Английский</text><text class="t u" x="580" y="503" textLength="25">для</text><text class="t u" x="548" y="524" textLength="88">путешествий</text>
<text class="t u" x="38" y="524" textLength="42">№ п/п</text><text class="t u" x="103" y="524" textLength="140">ФИО преподавателя</text>
<text class="t c" x="59" y="546">1</text><text class="t c" x="59" y="567">2</text><text class="t c" x="59" y="588">3</text><text class="t c" x="59" y="609">4</text>
<text class="t" x="94" y="546" textLength="94">Королев Д. А.</text><text class="t" x="94" y="567" textLength="108">Воробьева А. С.</text><text class="t" x="94" y="588" textLength="102">Соловьев Н. А.</text><text class="t" x="94" y="609" textLength="90">Павлова Р. Г.</text>
<text class="t c" x="307.5" y="546">1</text><text class="t c" x="408" y="546">0</text><text class="t c" x="498.5" y="546">0</text><text class="t c" x="592" y="546">0</text>
<text class="t c" x="307.5" y="567">0</text><text class="t c" x="408" y="567">0</text><text class="t c" x="498.5" y="567">0</text><text class="t c" x="592" y="567">1</text>
<text class="t c" x="307.5" y="588">0</text><text class="t c" x="408" y="588">0</text><text class="t c" x="498.5" y="588">1</text><text class="t c" x="592" y="588">0</text>
<text class="t c" x="307.5" y="609">0</text><text class="t c" x="408" y="609">1</text><text class="t c" x="498.5" y="609">0</text><text class="t c" x="592" y="609">0</text>

<text x="644" y="524" style="font-size:12.5px" textLength="35">Всего</text>
<text x="708" y="524" style="font-size:12.5px" textLength="75">Необходимо</text>
<text class="a e" x="702" y="546">1</text><text class="a e" x="702" y="567">1</text><text class="a e" x="702" y="588">1</text><text class="a e" x="702" y="609">1</text>
<text class="a e" x="766" y="546">= 1</text><text class="a e" x="766" y="567">= 1</text><text class="a e" x="766" y="588">= 1</text><text class="a e" x="766" y="609">= 1</text>

<!-- rows 20-22 -->
<text class="t" x="94" y="648" textLength="38">Всего</text>
<text class="t" x="94" y="669" textLength="84">Необходимо</text>
<text class="a e" x="358" y="650">1</text><text class="a e" x="452" y="650">1</text><text class="a e" x="539" y="650">1</text><text class="a e" x="638" y="650">1</text>
<text class="a e" x="358" y="671">= 1</text><text class="a e" x="452" y="671">= 1</text><text class="a e" x="539" y="671">= 1</text><text class="a e" x="638" y="671">= 1</text>
<text x="459" y="692" style="font-size:16px" textLength="130">Целевая функция</text>
<text class="e" x="702" y="691" style="font-size:16px">580</text>

<!-- vertical scrollbar -->
<g class="cr">
<rect x="1263" y="146" width="17" height="781" fill="#f8f7f2"/>
<rect x="1263" y="152" width="15" height="1" fill="#111"/>
<rect x="1264" y="154" width="14" height="15" rx="1" fill="#c3d3fb" stroke="#fff"/>
<rect x="1264" y="172" width="14" height="695" fill="#c1d3fb"/>
<rect x="1264" y="911" width="14" height="15" rx="1" fill="#c3d3fb"/>
<rect x="1278" y="146" width="2" height="781" fill="#ece9d8"/>
</g>
<path d="M1267 164l4-4 4 4" stroke="#4d6185" stroke-width="2" fill="none"/>
<path d="M1267 916l4 4 4-4" stroke="#4d6185" stroke-width="2" fill="none"/>
<path d="M1267 516.5h8M1267 518.5h8M1267 520.5h8M1267 522.5h8" stroke="#f0f4ff" class="cr"/>

<!-- tab bar -->
<g class="cr">
<rect x="0" y="926" width="1280" height="16" fill="#ece9d8"/>
<rect x="0" y="926" width="764" height="1" fill="#aca899"/>
<rect x="0" y="942" width="1280" height="3" fill="#fbfaf3"/>
<rect x="763" y="927" width="1" height="15" fill="#000"/>
<rect x="764" y="927" width="498" height="15" fill="#fbfbf6"/>
<rect x="765" y="928" width="14" height="13" fill="#c3d3fb"/>
<rect x="782" y="928" width="396" height="13" fill="#c1d3fb"/>
<rect x="1240" y="928" width="15" height="13" fill="#c3d3fb"/>
<rect x="1262" y="927" width="1" height="15" fill="#000"/>
</g>
<path d="M775 931l-4 4 4 4" stroke="#4d6185" stroke-width="2" fill="none"/>
<path d="M1245 931l4 4-4 4" stroke="#4d6185" stroke-width="2" fill="none"/>
<path d="M977 930.5v8M979 930.5v8M981 930.5v8M983 930.5v8" stroke="#f0f4ff" class="cr"/>
<path d="M6 930h1.500v8H6zM12 930v8l-4-4zM28 930v8l-5-4zM39 930l5 4-5 4zM55 930l5 4-5 4zM60 930h1.500v8H60z"/>
<path d="M66.5 927l7 14h42l6-14" stroke="#222" fill="none"/>
<path d="M118 941h47l6-14M118 941l5-9" stroke="#333" fill="none"/>
<path d="M168 941h45l7-14M168 941l5-9" stroke="#333" fill="none"/>
<text x="76" y="939" style="font-size:13px;font-weight:700" textLength="36">Лист1</text>
<text x="126" y="939" style="font-size:12.5px" textLength="33">Лист2</text>
<text x="175" y="939" style="font-size:12.5px" textLength="33">Лист3</text>

<!-- drawing toolbar -->
<rect x="0" y="945" width="1280" height="27" fill="url(#bar)" class="cr"/>
<rect x="2" y="945" width="624" height="26" rx="3" fill="url(#tb)"/>
<rect x="615" y="945" width="11" height="26" rx="2" fill="url(#che)"/>
<path d="M618 963h6M618 965h6l-3 3-3-3" stroke="#fff" fill="#fff"/>
<line x1="6" y1="950" x2="6" y2="965" class="hd"/>
<text class="m" x="12" y="962" textLength="48">Действия</text><rect x="38" y="963" width="6" height="1" class="cr"/>
<path d="M64 956h6l-3 3z"/>
<path d="M81 952v12l3-3 2 5 2-1-2-4h4z" fill="#e9eefa" stroke="#606a80"/>
<line class="sep" x1="99.5" y1="950" x2="99.5" y2="966"/>
<text class="m" x="105" y="962" textLength="63">Автофигуры</text><rect x="150" y="963" width="6" height="1" class="cr"/>
<path d="M172 956h7l-3.5 4z"/>
<path d="M188 952l12 12" class="k"/>
<path d="M212 952l9 10" stroke="#111"/><path d="M222 964l-5-1 3-3z"/>
<rect x="232.5" y="952.5" width="15" height="11" class="k"/>
<ellipse cx="263" cy="958" rx="7.5" ry="5.5" class="k"/>
<rect x="279.5" y="951.5" width="14" height="13" fill="#fff" stroke="#567"/><text x="281" y="959" style="font-size:8px;font-weight:700">A</text><path d="M287 953h5M287 955h5M287 957h5M281 960h11M281 962h11" stroke="#567"/>
<path d="M301 965l10-13h5v13h-4v-3h-6l-2 3z" fill="#3f78d2" stroke="#234f9a"/>
<circle cx="331" cy="951" r="2" fill="#d8c94a"/><circle cx="337" cy="957" r="2" fill="#d34a3a"/><circle cx="331" cy="964" r="2" fill="#4a78c8"/><circle cx="325" cy="957" r="2" fill="#4aa84a"/><circle cx="331" cy="958" r="6" fill="none" stroke="#4b5d7a" stroke-dasharray="2 2"/>
<rect x="348.5" y="951.5" width="13" height="13" fill="#fff" stroke="#445"/><circle cx="355" cy="957" r="3" fill="#c4723a"/><rect x="351" y="960" width="8" height="4" fill="#c4723a"/>
<rect x="371.5" y="951.5" width="14" height="13" fill="#fff" stroke="#445"/><path d="M373 963l4-6 3 3 2-2 3 5z" fill="#7a9acb"/><circle cx="382" cy="955" r="1.5" fill="#f0a020"/>
<line class="sep" x1="392.5" y1="950" x2="392.5" y2="966"/>
<path d="M401 957l6-6 6 6-5 5z" fill="#e8eef8" stroke="#445"/><rect x="399" y="963" width="16" height="4" fill="#fcc48c" class="cr"/>
<path d="M420 957h6l-3 3z"/>
<path d="M436 960l9-8 3 3-8 7z" fill="#6b6ec8"/><circle cx="445" cy="954" r="2" fill="#d8a82c"/><rect x="433" y="963" width="16" height="4" fill="#0033ee" class="cr"/>
<path d="M456 957h6l-3 3z"/>
<text x="469" y="962" style="font-family:'Liberation Serif',serif;font-size:15px;font-weight:700;fill:#2d4a90">A</text><rect x="467" y="962" width="16" height="4" fill="#f00" class="cr"/>
<path d="M490 957h6l-3 3z"/>
<g class="cr"><rect x="501" y="952" width="15" height="1"/><rect x="501" y="955" width="15" height="2"/><rect x="501" y="960" width="15" height="3"/></g>
<path d="M524 953.5h15M524 957.5h15M524 961.5h15" stroke="#111" stroke-dasharray="1 1" class="cr"/><path d="M524 959.5h15" stroke="#111" stroke-dasharray="3 2" class="cr"/>
<path d="M548 952h11M559 952l-3-2m3 2l-3 2M547 958h15M551 958l-3-2m3 2l-3 2M547 963h15M547 963l3-2m-3 2l3 2M562 963l-3-2m3 2l-3 2" stroke="#111" fill="none"/>
<rect x="571" y="951" width="11" height="11" fill="#6fa872" stroke="#3a6a3c"/><path d="M573 963h11v-10" stroke="#5a6370" stroke-width="2" fill="none"/>
<path d="M594 954l4-3h11v10l-4 4h-11z" fill="#7fb27a" stroke="#3a6a3c"/><path d="M594 954h11v11M605 954l4-3" fill="none" stroke="#3a6a3c"/>

<!-- status bar -->
<rect x="0" y="972" width="1280" height="19" fill="#ece9d8" class="cr"/>
<text x="4" y="986" style="font-size:11.5px" textLength="36">Готово</text>
<g class="cr" fill="none" stroke="#d4d0c2">
<rect x="954.5" y="974.5" width="33" height="14"/><rect x="989.5" y="974.5" width="111" height="14"/><rect x="1102.5" y="974.5" width="25" height="14"/><rect x="1129.5" y="974.5" width="29" height="14"/><rect x="1187.5" y="974.5" width="29" height="14"/><rect x="1217.5" y="974.5" width="25" height="14"/><rect x="1244.5" y="974.5" width="32" height="14"/>
</g>
<text x="1162" y="986" style="font-size:11px" textLength="23">NUM</text>

<!-- taskbar -->
<rect x="0" y="991" width="1280" height="33" fill="url(#task)"/>
<rect x="1170" y="993" width="110" height="31" fill="url(#tray)"/>
<path d="M0 994h82q10 1 13 13-1 12-13 16H0z" fill="url(#st)"/>
<path d="M12 1002l7-2v6l-7 2z" fill="#e2513a"/><path d="M20 1000l7-1v7l-7 0z" fill="#7fc24a"/><path d="M11 1009l7-1v7l-7 2z" fill="#4a8ce0"/><path d="M20 1008l7 0v7l-7 1z" fill="#f0c83a"/>
<text x="34" y="1015" style="font-size:16.5px;font-weight:700;font-style:italic;fill:#fff" textLength="38">пуск</text>
<line x1="107" y1="999" x2="107" y2="1020" stroke="#0d2f8c" stroke-width="2" stroke-dasharray="2 2"/>
<line x1="289.5" y1="999" x2="289.5" y2="1020" stroke="#0d2f8c" stroke-width="2" stroke-dasharray="2 2"/>
<line x1="1084" y1="999" x2="1084" y2="1020" stroke="#0d2f8c" stroke-width="2" stroke-dasharray="2 2"/>
<rect x="118.5" y="1001.5" width="15" height="15" fill="#d63a1c" stroke="#7a1c0c"/><path d="M121 1005l5 4 5-4M121 1009l5 4 5-4" stroke="#f8d63c" stroke-width="2" fill="none"/>
<circle cx="149" cy="1009" r="2.5" fill="#d43c2c"/><g fill="#4bbb3a"><circle cx="149" cy="1003" r="2.5"/><circle cx="149" cy="1015" r="2.5"/><circle cx="143" cy="1009" r="2.5"/><circle cx="155" cy="1009" r="2.5"/><circle cx="145" cy="1005" r="2.5"/><circle cx="153" cy="1005" r="2.5"/><circle cx="145" cy="1013" r="2.5"/><circle cx="153" cy="1013" r="2.5"/></g>
<rect x="164" y="1001" width="16" height="16" fill="#fff"/><rect x="170" y="1003" width="3" height="8" fill="#e8a91c"/><path d="M165 1002l6 8-6 5z" fill="#2c5cc4"/><rect x="173" y="1003" width="5" height="8" fill="#e8c31c"/><rect x="168" y="1012" width="11" height="4" fill="#2c9c4c"/>
<rect x="187.5" y="1002.5" width="15" height="14" fill="#6a7ea6" stroke="#d8e0ee"/><path d="M190 1006h10M190 1009h10" stroke="#e0e4ee"/><rect x="190" y="1012" width="3" height="3" fill="#dde"/><rect x="195" y="1012" width="3" height="3" fill="#dde"/>
<text x="209" y="1016" style="font-family:'Liberation Serif',serif;font-size:22px;font-weight:700;font-style:italic;fill:#4fb8ee">e</text><path d="M209 1013q5-10 17-9" stroke="#2a78cc" stroke-width="1.5" fill="none"/>
<circle cx="240" cy="1009" r="7.5" fill="#e6a02c" stroke="#fff"/><circle cx="240" cy="1009" r="4.5" fill="#fff"/><path d="M238.5 1006l4 3-4 3z" fill="#2c9c4c"/>
<rect x="256.5" y="1003.5" width="11" height="12" rx="2" fill="#e8eef8" stroke="#2a58b8"/><circle cx="263" cy="1009" r="3.5" fill="none" stroke="#2a58b8"/><path d="M262 1006l7-3" stroke="#d33" stroke-width="1.5"/>
<rect x="298" y="998" width="158" height="23" rx="2" fill="#3c81f3"/>
<rect x="458" y="998" width="159" height="23" rx="2" fill="#1e52b7" stroke="#14398c"/>
<rect x="310.5" y="1002.5" width="12" height="14" fill="#eef2f8" stroke="#6b7b92"/><rect x="307" y="1003" width="9" height="9" fill="#2a5cb8"/><text x="308" y="1011" style="font-size:8px;font-weight:700;fill:#fff">W</text>
<text class="w" x="326" y="1014" textLength="112">Метод. указания_Е...</text>
<rect x="471.5" y="1002.5" width="12" height="14" fill="#eef2f8" stroke="#6b7b92"/><rect x="468" y="1003" width="9" height="9" fill="#1f7f3a"/><path d="M469.5 1004.5l6 6M475.5 1004.5l-6 6" stroke="#fff"/>
<text class="w" x="487" y="1014" textLength="35">Книга1</text>
<rect x="1096" y="1001" width="16" height="16" fill="#3f6fc8" class="cr"/>
<text class="w" x="1097" y="1013" textLength="13">RU</text>
<path d="M1120.5 1002.5h13v13h-5l-2 3v-3h-6z" fill="#fff8d8" stroke="#111"/><text x="1123" y="1013" style="font-size:12px;font-weight:700;fill:#101070">?</text>
<path d="M1150.5 1004.5v-2h7v4h-2M1148.5 1004.5h6v4h-6z" stroke="#fff" fill="none"/><path d="M1150 1014h8l-4 3z" fill="#fff"/>
<circle cx="1169" cy="1009" r="9" fill="#2f7fe0" stroke="#e6f0ff" stroke-width="1.3"/><path d="M1172 1004l-5 5 5 5" stroke="#fff" stroke-width="2.5" fill="none"/>
<path d="M1181 1011l8 6 7-5-8-5z" fill="#aab4c2" stroke="#2a3040"/><path d="M1189 1000v7M1185.5 1004l3.5 4 3.5-4" stroke="#4ec03a" stroke-width="2.2" fill="none"/>
<rect x="1204.5" y="1000.5" width="8" height="9" fill="#5a74b4" stroke="#1a2038"/><rect x="1198.5" y="1005.5" width="9" height="9" fill="#7b94d0" stroke="#1a2038"/><rect x="1199" y="1015" width="9" height="3" fill="#d4d8e4"/>
<path d="M1224 999l2 7 7-1-5 5 3 7-7-4-7 4 3-7-5-5 7 1z" fill="#0f8de4" stroke="#10141c" stroke-width="1.5"/>
<text class="w" x="1239" y="1014" textLength="28">14:31</text>
</svg>
</body>
</html>
